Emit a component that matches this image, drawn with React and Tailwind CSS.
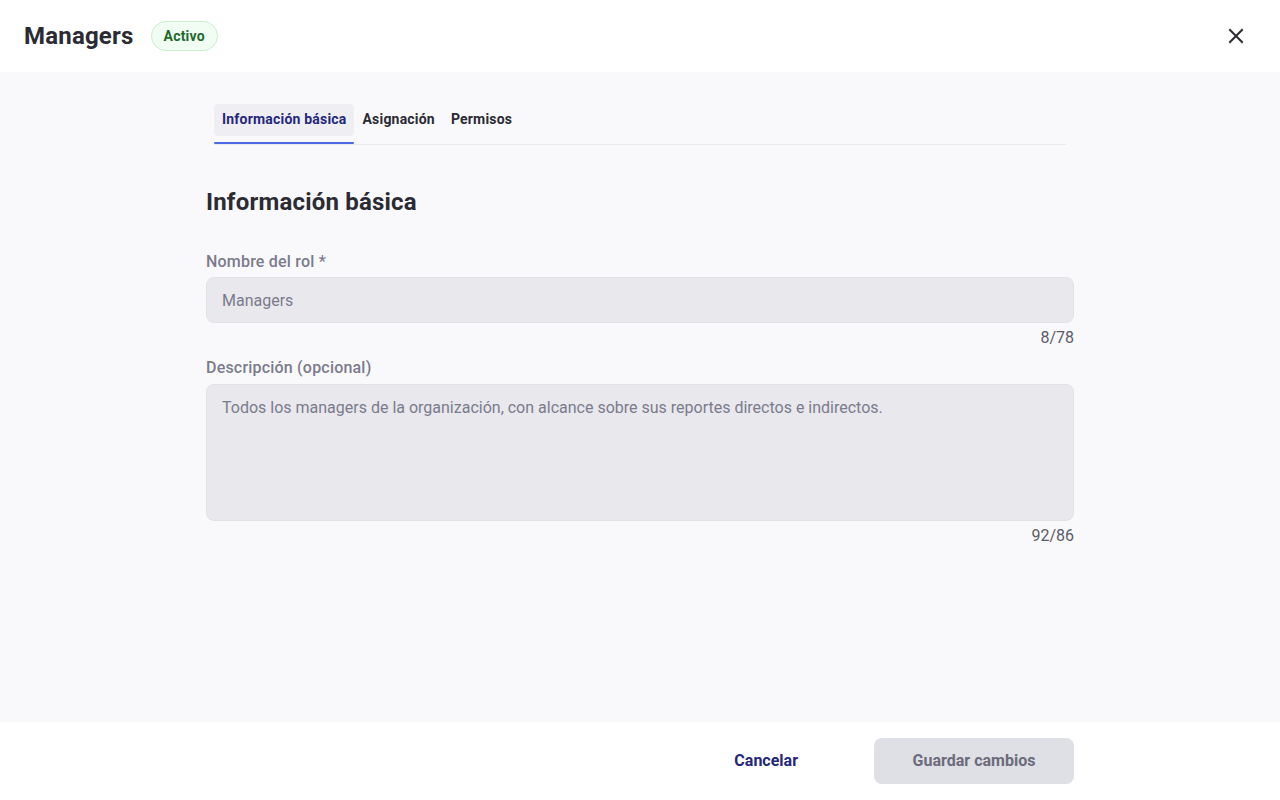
import React, { useState } from 'react';

const tabs = ['Información básica', 'Asignación', 'Permisos'];

export default function App(){
  const [tab, setTab] = useState(0);
  const [name, setName] = useState('Managers');
  const [desc, setDesc] = useState('Todos los managers de la organización, con alcance sobre sus reportes directos e indirectos.');

  return (
    <div className="w-[1280px] h-[800px] flex flex-col bg-[#f9f9fb] text-[#2b2b33]" style={{fontFamily:'Roboto, "Liberation Sans", sans-serif'}}>
      {/* header */}
      <header className="h-[72px] shrink-0 bg-white flex items-center justify-between pl-6 pr-[34px]">
        <div className="flex items-center gap-[17px]">
          <h1 className="text-[24px] font-bold text-[#2b2b33] leading-none tracking-[0.2px]">Managers</h1>
          <span className="h-[30px] px-3 rounded-full border border-[#c9efcc] bg-[#f1fcf2] text-[#1d6a2b] text-[14px] font-bold tracking-[0.2px] flex items-center">Activo</span>
        </div>
        <button className="text-[#2b2b33]">
          <svg width="20" height="20" viewBox="0 0 20 20" fill="none" stroke="currentColor" strokeWidth="2" strokeLinecap="square">
            <path d="M4 4l12 12M16 4L4 16" />
          </svg>
        </button>
      </header>

      {/* body */}
      <main className="flex-1 flex justify-center">
        <div className="w-[868px] pt-8">
          <div className="mx-2 flex items-end border-b border-[#e9e9ee]">
            {tabs.map((t,i)=>(
              <button key={t} onClick={()=>setTab(i)}
                className={"relative h-[40px] px-2 text-[14px] font-bold tracking-[0.2px] " + (tab===i ? 'text-[#25287a]' : 'text-[#2b2b33]')}>
                {tab===i && <span className="absolute left-0 right-0 top-0 h-[32px] rounded bg-[#eeeef3]" />}
                <span className="relative block -mt-2.5">{t}</span>
                {tab===i && <span className="absolute left-0 right-0 bottom-0 h-[2px] bg-[#4b69e0] rounded-full" />}
              </button>
            ))}
          </div>

          <h2 className="mt-[45px] text-[24px] font-bold leading-none tracking-[0.2px] text-[#2b2b33]">Información básica</h2>

          <label className="block mt-[36px] text-[16px] font-medium tracking-[0.2px] text-[#7b7b8c]">Nombre del rol *</label>
          <input value={name} onChange={e=>setName(e.target.value)}
            className="mt-[3px] w-full h-[46px] rounded-lg bg-[#e8e8ed] border border-[#e1e1e6] px-[15px] text-[16px] text-[#7b7b8c] outline-none" />
          <div className="mt-[5px] text-right text-[16px] text-[#5b5b68] leading-5">{name.length}/78</div>

          <label className="block mt-[8px] text-[16px] font-medium tracking-[0.2px] text-[#7b7b8c]">Descripción (opcional)</label>
          <textarea value={desc} onChange={e=>setDesc(e.target.value)}
            className="mt-[4px] block w-full h-[137px] resize-none rounded-lg bg-[#e8e8ed] border border-[#e1e1e6] px-[15px] py-[11px] text-[16px] text-[#7b7b8c] outline-none leading-6" />
          <div className="mt-[5px] text-right text-[16px] text-[#5b5b68] leading-5">92/86</div>
        </div>
      </main>

      {/* footer */}
      <footer className="h-[78px] shrink-0 bg-white flex items-center justify-end pr-[206px] gap-[76px]">
        <button className="text-[16px] font-bold text-[#25287a]">Cancelar</button>
        <button disabled className="w-[200px] h-[46px] rounded-lg bg-[#dfe0e6] text-[16px] font-bold text-[#6b6b7b]">Guardar cambios</button>
      </footer>
    </div>
  );
}
